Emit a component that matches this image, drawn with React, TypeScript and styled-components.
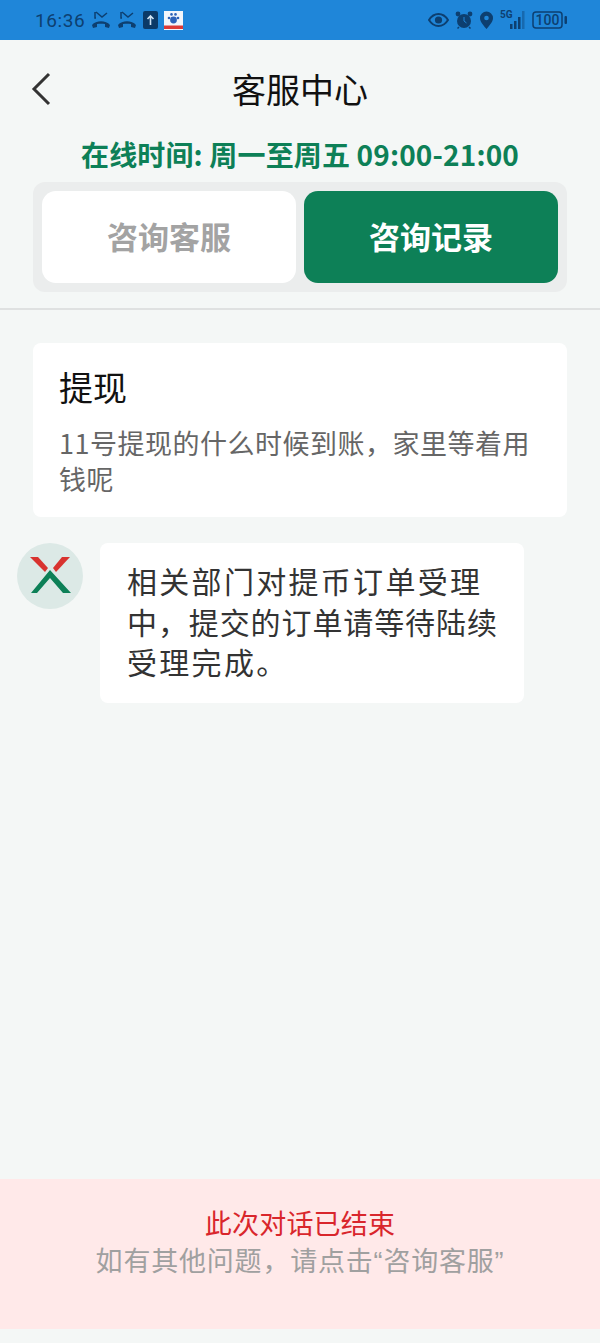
import { createGlobalStyle } from "styled-components";
import styled from "styled-components";

const GlobalStyle = createGlobalStyle`
html, body { margin: 0; padding: 0; background: #f4f7f6; }
body { font-family: "Noto Sans CJK SC", "Noto Sans", sans-serif; }
`;

const Page = styled.div`
width: 600px;
height: 1343px;
display: flex;
flex-direction: column;
overflow: hidden;
background: #f4f7f6;
`;

const StatusBar = styled.div`
height: 40px;
flex: none;
background: #1f86d9;
display: flex;
align-items: center;
justify-content: space-between;
padding: 0 33px 0 35px;
color: #0d3f70;
`;

const StatusGroup = styled.div`
display: flex;
align-items: center;
gap: 6px;
`;

const Clock = styled.span`
font-family: "Roboto", sans-serif;
font-size: 19px;
letter-spacing: 0.6px;
`;

const Header = styled.div`
height: 96px;
flex: none;
display: flex;
align-items: center;
justify-content: center;
position: relative;
`;

const BackIcon = styled.svg`
position: absolute;
left: 29px;
top: 31px;
`;

const Title = styled.h1`
margin: 0;
font-size: 34px;
font-weight: 400;
color: #111;
`;

const OnlineHours = styled.div`
height: 36px;
padding-bottom: 10px;
flex: none;
display: flex;
align-items: center;
justify-content: center;
font-size: 28px;
font-weight: 700;
letter-spacing: 0.15px;
color: #0d8057;
`;

const Tabs = styled.div`
margin: 0 33px;
height: 110px;
box-sizing: border-box;
padding: 9px;
display: grid;
grid-template-columns: 1fr 1fr;
gap: 8px;
background: #ebeded;
border-radius: 12px;
flex: none;
`;

const Tab = styled.div<{ $active?: boolean }>`
display: flex;
align-items: center;
justify-content: center;
padding-bottom: 4px;
border-radius: 14px;
font-size: 31px;
font-weight: 700;
background: ${(p) => (p.$active ? "#0d8057" : "#fff")};
color: ${(p) => (p.$active ? "#fff" : "#a3a3a3")};
`;

const Divider = styled.div`
height: 2px;
margin-top: 16px;
background: #dfe1e1;
flex: none;
`;

const Content = styled.div`
flex: 1;
padding: 33px 33px 0 17px;
display: flex;
flex-direction: column;
gap: 26px;
`;

const QuestionCard = styled.div`
margin-left: 16px;
height: 174px;
box-sizing: border-box;
padding: 20px 26px 0;
background: #fff;
border-radius: 8px;
`;

const QuestionTitle = styled.div`
font-size: 34px;
line-height: 48px;
color: #111;
`;

const QuestionBody = styled.div`
margin-top: 14px;
font-size: 27px;
line-height: 36px;
letter-spacing: 0.5px;
color: #666;
`;

const ReplyRow = styled.div`
display: flex;
align-items: flex-start;
gap: 17px;
`;

const Avatar = styled.div`
width: 66px;
height: 66px;
flex: none;
border-radius: 50%;
background: #dce9e6;
display: flex;
align-items: center;
justify-content: center;
`;

const Bubble = styled.div`
width: 424px;
height: 160px;
box-sizing: border-box;
padding: 17px 10px 0 27px;
background: #fff;
border-radius: 8px;
font-size: 30px;
line-height: 40.5px;
color: #333;
`;

const BubbleLine = styled.div<{ $tight?: boolean }>`
white-space: nowrap;
letter-spacing: ${(p) => (p.$tight ? "0.9px" : "2.3px")};
`;

const Notice = styled.div`
height: 150px;
flex: none;
margin-bottom: 14px;
box-sizing: border-box;
padding-top: 25px;
background: #ffe9e9;
text-align: center;
`;

const NoticeTitle = styled.div`
font-size: 27px;
line-height: 38px;
letter-spacing: 0.2px;
color: #d9262c;
`;

const NoticeHint = styled.div`
margin-top: 2px;
font-family: "Liberation Sans", "Noto Sans CJK SC", sans-serif;
font-size: 27px;
line-height: 36px;
letter-spacing: 0.8px;
color: #a0a0a0;
`;

const LeftIcons = () => (
  <>
    <svg width="20" height="18" viewBox="0 0 20 18">
      <path d="M1 14c4-5 14-5 18 0l-1 3-4-1v-3c-3-.5-5-.5-8 0v3l-4 1z" fill="currentColor" />
      <path d="M4 1v6h1M5 1l6 5 5-4" fill="none" stroke="currentColor" strokeWidth="1.5" />
    </svg>
    <svg width="20" height="18" viewBox="0 0 20 18">
      <path d="M1 14c4-5 14-5 18 0l-1 3-4-1v-3c-3-.5-5-.5-8 0v3l-4 1z" fill="currentColor" />
      <path d="M4 1v6h1M5 1l6 5 5-4" fill="none" stroke="currentColor" strokeWidth="1.5" />
    </svg>
    <svg width="15" height="18" viewBox="0 0 15 18">
      <rect width="15" height="18" rx="2" fill="#0b3a68" />
      <path d="M7.5 14V5M4.5 8l3-3 3 3" fill="none" stroke="#cfe4f5" strokeWidth="1.6" />
    </svg>
    <svg width="19" height="19" viewBox="0 0 19 19">
      <rect width="19" height="19" fill="#f2f6fb" />
      <circle cx="9.5" cy="9" r="3.4" fill="#2c62b8" />
      <circle cx="5" cy="7" r="1.3" fill="#2c62b8" />
      <circle cx="14" cy="7" r="1.3" fill="#2c62b8" />
      <circle cx="7.5" cy="3.4" r="1.3" fill="#2c62b8" />
      <circle cx="11.5" cy="3.4" r="1.3" fill="#2c62b8" />
      <rect y="14.500" width="19" height="3.500" fill="#dd3a36" />
    </svg>
  </>
);

const RightIcons = () => (
  <>
    <svg width="21" height="14" viewBox="0 0 21 14">
      <path d="M1 7c5-8 14-8 19 0-5 8-14 8-19 0z" fill="none" stroke="currentColor" strokeWidth="2" />
      <circle cx="10.5" cy="7" r="3.6" fill="currentColor" />
    </svg>
    <svg width="18" height="18" viewBox="0 0 18 18">
      <circle cx="9" cy="10" r="7" fill="currentColor" />
      <circle cx="3" cy="3" r="2.4" fill="currentColor" />
      <circle cx="15" cy="3" r="2.4" fill="currentColor" />
      <path d="M9 6v4l2.5 2" fill="none" stroke="#1f86d9" strokeWidth="1" />
      <path d="M4 16l-1.500 1.500M14 16l1.500 1.500" stroke="currentColor" strokeWidth="1.500" />
    </svg>
    <svg width="15" height="19" viewBox="0 0 15 19">
      <path d="M7.5 18C3 13 1 10 1 7a6.500 6.500 0 0 1 13 0c0 3-2 6-6.500 11z" fill="currentColor" />
      <circle cx="7.500" cy="7" r="2.300" fill="#1f86d9" />
    </svg>
    <svg width="26" height="20" viewBox="0 0 26 20">
      <text x="0" y="8" fontSize="10" fontWeight="700" fill="currentColor" fontFamily="Roboto, sans-serif">5G</text>
      <rect x="10" y="14" width="2.500" height="5" fill="currentColor" />
      <rect x="14" y="11" width="2.500" height="8" fill="currentColor" />
      <rect x="18" y="7" width="2.500" height="12" fill="currentColor" />
      <rect x="22" y="1" width="2.500" height="18" fill="currentColor" opacity="0.4" />
    </svg>
    <svg width="35" height="18" viewBox="0 0 35 18">
      <rect x="1" y="1" width="29" height="16" rx="3" fill="none" stroke="currentColor" strokeWidth="1.500" />
      <text x="15.500" y="14" textAnchor="middle" fontSize="14" fontWeight="500" fill="currentColor" fontFamily="Roboto, sans-serif">100</text>
      <rect x="32.500" y="5" width="2.500" height="8" rx="1" fill="currentColor" />
    </svg>
  </>
);

export default function App() {
  return (
    <Page>
      <GlobalStyle />
      <StatusBar>
        <StatusGroup>
          <Clock>16:36</Clock>
          <LeftIcons />
        </StatusGroup>
        <StatusGroup>
          <RightIcons />
        </StatusGroup>
      </StatusBar>
      <Header>
        <BackIcon width="26" height="36" viewBox="0 0 26 36">
          <path d="M20 3 L5 18 L20 33" fill="none" stroke="#333" strokeWidth="3" />
        </BackIcon>
        <Title>客服中心</Title>
      </Header>
      <OnlineHours>在线时间: 周一至周五 09:00-21:00</OnlineHours>
      <Tabs>
        <Tab>咨询客服</Tab>
        <Tab $active>咨询记录</Tab>
      </Tabs>
      <Divider />
      <Content>
        <QuestionCard>
          <QuestionTitle>提现</QuestionTitle>
          <QuestionBody>11号提现的什么时候到账，家里等着用钱呢</QuestionBody>
        </QuestionCard>
        <ReplyRow>
          <Avatar>
            <svg width="42" height="40" viewBox="0 0 42 40">
              <path d="M1 1H9L19 12 16 16Z" fill="#d8332f" />
              <path d="M41 1H33L24 12 27 16Z" fill="#d8332f" />
              <path d="M21 14 42 37H34L21 22 8 37H2Z" fill="#0d8057" />
            </svg>
          </Avatar>
          <Bubble>
            <BubbleLine>相关部门对提币订单受理</BubbleLine>
            <BubbleLine $tight>中，提交的订单请等待陆续</BubbleLine>
            <BubbleLine>受理完成。</BubbleLine>
          </Bubble>
        </ReplyRow>
      </Content>
      <Notice>
        <NoticeTitle>此次对话已结束</NoticeTitle>
        <NoticeHint>如有其他问题，请点击“咨询客服”</NoticeHint>
      </Notice>
    </Page>
  );
}
